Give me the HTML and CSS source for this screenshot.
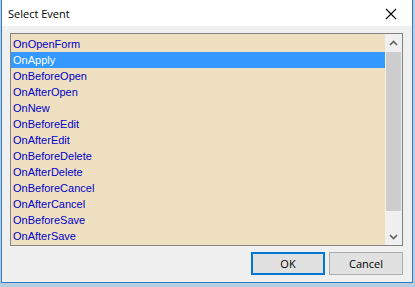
FILE: index.html
```html
<!DOCTYPE html>
<html lang="en">
<head>
  <meta charset="UTF-8" />
  <title>Select Event</title>
  <link rel="stylesheet" href="styles.css">
</head>
<body>
  <div class="window">
    <div class="titlebar">
      <span class="title">Select Event</span>
      <svg class="close" width="12" height="12" viewBox="0 0 12 12">
        <path d="M1 1 L11 11 M11 1 L1 11" stroke="#000" stroke-width="1.1" fill="none" />
      </svg>
    </div>
    <div class="client">
      <div class="listbox">
        <ul class="items">
          <li>OnOpenForm</li>
          <li class="selected">OnApply</li>
          <li>OnBeforeOpen</li>
          <li>OnAfterOpen</li>
          <li>OnNew</li>
          <li>OnBeforeEdit</li>
          <li>OnAfterEdit</li>
          <li>OnBeforeDelete</li>
          <li>OnAfterDelete</li>
          <li>OnBeforeCancel</li>
          <li>OnAfterCancel</li>
          <li>OnBeforeSave</li>
          <li>OnAfterSave</li>
        </ul>
        <div class="scrollbar">
          <div class="arrow">
            <svg width="9" height="6" viewBox="0 0 9 6"><path d="M1 5 L4.5 1.5 L8 5" stroke="#606060" stroke-width="1.6" fill="none" /></svg>
          </div>
          <div class="track"><div class="thumb"></div></div>
          <div class="arrow">
            <svg width="9" height="6" viewBox="0 0 9 6"><path d="M1 1 L4.5 4.5 L8 1" stroke="#606060" stroke-width="1.6" fill="none" /></svg>
          </div>
        </div>
      </div>
      <div class="buttons">
        <button class="default">OK</button>
        <button>Cancel</button>
      </div>
    </div>
  </div>
</body>
</html>
```

FILE: styles.css
```css
body {
  margin: 0;
  background: #b8cde0;
  height: 287px;
  overflow: hidden;
}
.window {
  margin: 0 2px 0 1px;
  height: 282px;
  border: 1px solid #2f7cc0;
  border-top: none;
  display: flex;
  flex-direction: column;
  background: #f0f0f0;
}
.titlebar {
  height: 26px;
  background: #fff;
  display: flex;
  align-items: center;
  justify-content: space-between;
  padding: 0 15px 0 6px;
  flex-shrink: 0;
}
.title {
  font-family: "Open Sans", "Noto Sans", sans-serif;
  font-size: 11px;
  color: #000;
  margin-top: 1px;
}
.close {
  margin-top: 1px;
}
.client {
  flex: 1;
  padding: 7px 9px 0 8px;
  display: flex;
  flex-direction: column;
}
.listbox {
  height: 211px;
  border: 1px solid #828282;
  background: #efe0c1;
  display: flex;
}
.items {
  flex: 1;
  list-style: none;
  margin: 0;
  padding: 2px 0 0 0;
  font-family: "Liberation Sans", Arial, sans-serif;
  font-size: 11px;
  color: #0000c8;
}
.items li {
  height: 16px;
  line-height: 16px;
  padding-left: 2px;
}
.items li.selected {
  background: #3399ff;
  color: #fff;
}
.scrollbar {
  width: 17px;
  background: #f0f0f0;
  display: flex;
  flex-direction: column;
}
.arrow {
  height: 17px;
  display: flex;
  align-items: center;
  justify-content: center;
}
.track {
  flex: 1;
  padding: 1px 1px;
}
.thumb {
  height: 159px;
  background: #cdcdcd;
}
.buttons {
  display: flex;
  justify-content: flex-end;
  gap: 4px;
  margin-top: 6px;
  padding-right: 0;
}
button {
  width: 74px;
  height: 23px;
  border: 1px solid #adadad;
  background: #e1e1e1;
  font-family: "Open Sans", "Noto Sans", sans-serif;
  font-size: 11px;
  color: #000;
  padding: 0;
}
button.default {
  border: 2px solid #0078d7;
}
```
